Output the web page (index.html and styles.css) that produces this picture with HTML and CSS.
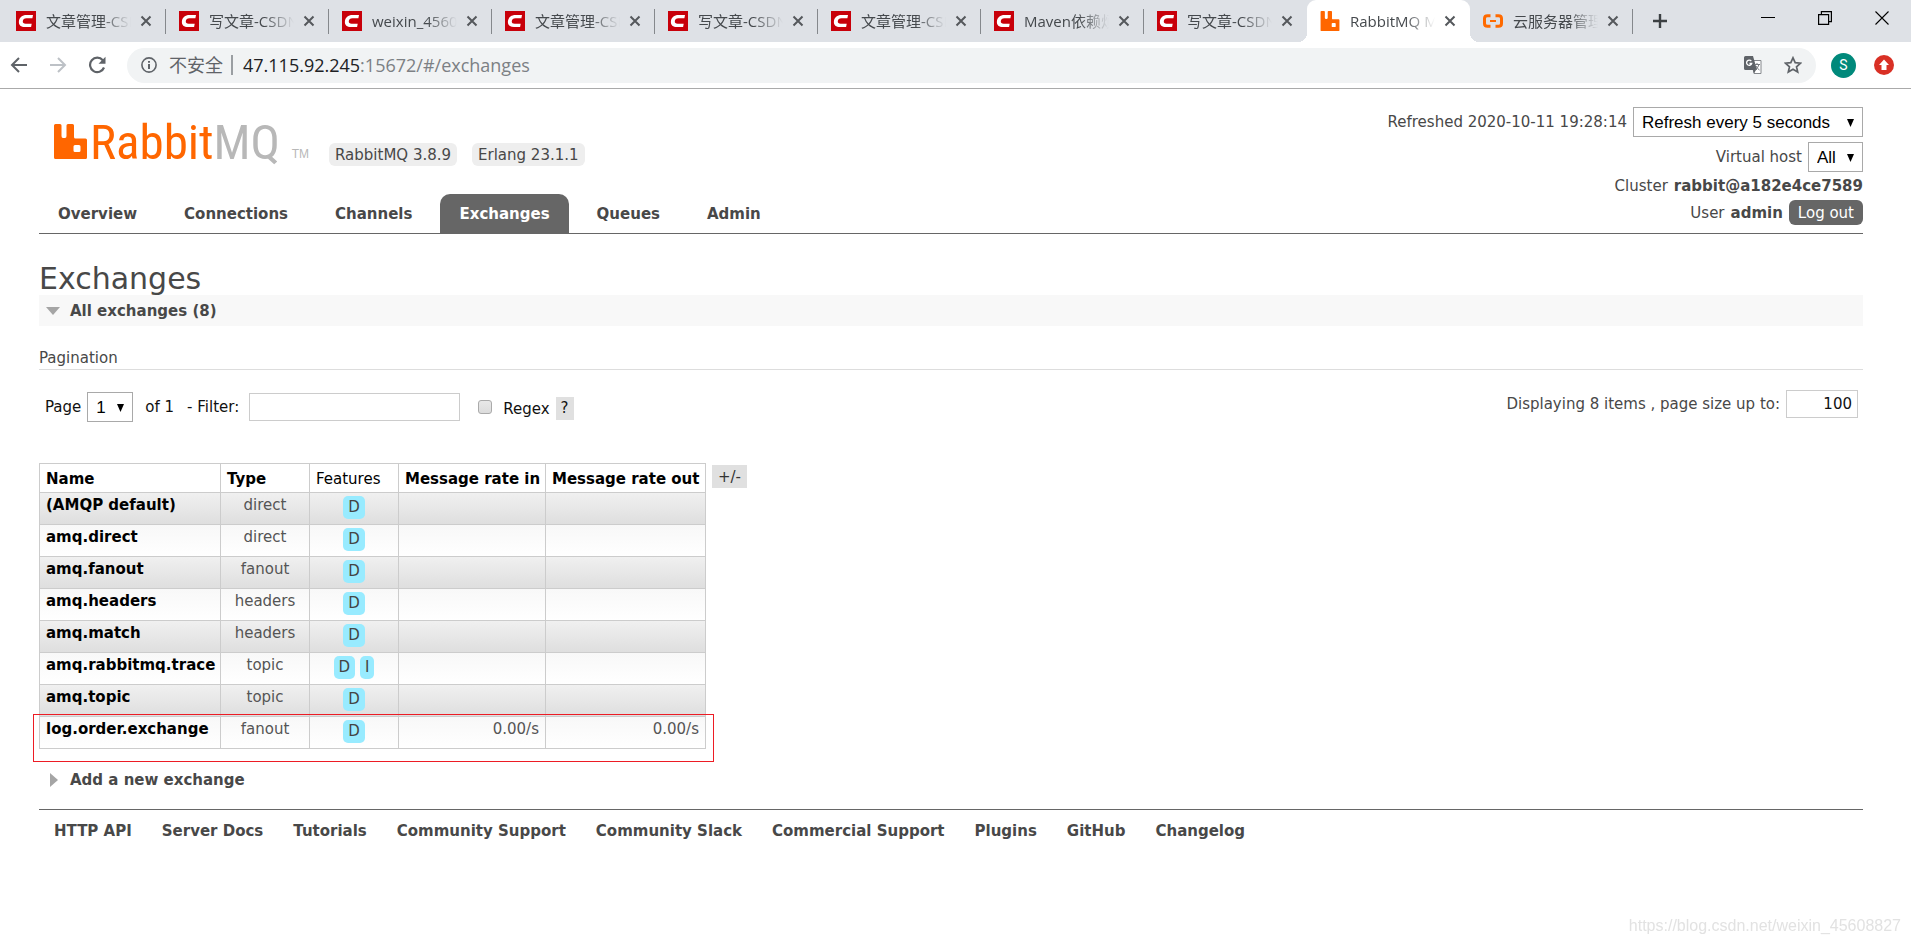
FILE: index.html
```html
<!DOCTYPE html>
<html lang="en">
<head>
<meta charset="utf-8">
<title>RabbitMQ Management</title>
<link rel="stylesheet" href="styles.css">
</head>
<body>
<svg class="sprite" aria-hidden="true">
  <symbol id="csdn" viewBox="0 0 20 20"><path fill="#c8000a" d="M0 0h20v20H0z"/><path fill="#fff" d="M17 4l-.6 3.200H10.500C8.200 7.200 7 8.300 6.800 10.100c-.2 1.800.8 2.700 2.900 2.700h6l-.6 3.200H9C5 16 2.600 14 2.900 10.400 3.200 6.500 6.200 4 10.500 4z"/></symbol>
  <symbol id="rabbit" viewBox="0 0 33 35"><path fill="#f60" fill-rule="evenodd" d="M1.500 0h4.500q1.500 0 1.500 1.500V12q0 2 1.500 2h2q1.500 0 1.500-2V1.500Q12.500 0 14 0h4.500Q20 0 20 1.500V13q0 1.500 1.500 1.500h10Q33 14.500 33 16v17.500q0 1.500-1.500 1.500h-30Q0 35 0 33.500v-32Q0 0 1.500 0zM21 21q-1.500 0-1.500 1.500v4Q19.500 28 21 28h4q1.500 0 1.500-1.500v-4Q26.500 21 25 21z"/></symbol>
  <symbol id="close" viewBox="0 0 12 12"><path stroke="#55585c" stroke-width="2" d="M1.500 1.500l9 9m0-9l-9 9"/></symbol>
</svg>

<header class="browser">
  <div class="tabstrip">
    <div class="tab"><svg class="fav"><use href="#csdn"/></svg><span class="tab-title">文章管理-CSDN</span><button class="tab-close" aria-label="Close"><svg><use href="#close"/></svg></button></div>
    <div class="tab"><svg class="fav"><use href="#csdn"/></svg><span class="tab-title">写文章-CSDN</span><button class="tab-close" aria-label="Close"><svg><use href="#close"/></svg></button></div>
    <div class="tab"><svg class="fav"><use href="#csdn"/></svg><span class="tab-title">weixin_45608827</span><button class="tab-close" aria-label="Close"><svg><use href="#close"/></svg></button></div>
    <div class="tab"><svg class="fav"><use href="#csdn"/></svg><span class="tab-title">文章管理-CSDN</span><button class="tab-close" aria-label="Close"><svg><use href="#close"/></svg></button></div>
    <div class="tab"><svg class="fav"><use href="#csdn"/></svg><span class="tab-title">写文章-CSDN</span><button class="tab-close" aria-label="Close"><svg><use href="#close"/></svg></button></div>
    <div class="tab"><svg class="fav"><use href="#csdn"/></svg><span class="tab-title">文章管理-CSDN</span><button class="tab-close" aria-label="Close"><svg><use href="#close"/></svg></button></div>
    <div class="tab"><svg class="fav"><use href="#csdn"/></svg><span class="tab-title">Maven依赖烦恼</span><button class="tab-close" aria-label="Close"><svg><use href="#close"/></svg></button></div>
    <div class="tab before-active"><svg class="fav"><use href="#csdn"/></svg><span class="tab-title">写文章-CSDN</span><button class="tab-close" aria-label="Close"><svg><use href="#close"/></svg></button></div>
    <div class="tab active"><svg class="fav"><use href="#rabbit"/></svg><span class="tab-title">RabbitMQ Management</span><button class="tab-close" aria-label="Close"><svg><use href="#close"/></svg></button></div>
    <div class="tab"><svg class="fav" viewBox="0 0 20 20"><g fill="none" stroke="#ff6a00" stroke-width="3"><path d="M7.500 4.700H4.500Q1.500 4.700 1.500 7.500v5q0 2.800 3 2.800h3M12.500 4.700h3q3 0 3 2.800v5q0 2.800-3 2.800h-3"/><path stroke-width="2" d="M7 10h6"/></g></svg><span class="tab-title">云服务器管理控制台</span><button class="tab-close" aria-label="Close"><svg><use href="#close"/></svg></button></div>
    <button class="new-tab" aria-label="New tab"><svg width="16" height="16" viewBox="0 0 16 16"><path stroke="#3c4043" stroke-width="2.400" d="M8 1v14M1 8h14"/></svg></button>
    <div class="window-buttons">
      <button aria-label="Minimize"><svg viewBox="0 0 14 14"><path stroke="#000" d="M0 6.500h14"/></svg></button>
      <button aria-label="Restore"><svg viewBox="0 0 14 14"><path fill="none" stroke="#000" stroke-width="1.200" d="M.6 3.600h10v9.800H.6zM3.400 3.400V.6h10v10h-2.800"/></svg></button>
      <button aria-label="Close window"><svg viewBox="0 0 14 14"><path stroke="#000" stroke-width="1.100" d="M.5 .5l13 13m0-13l-13 13"/></svg></button>
    </div>
  </div>
  <div class="toolbar">
    <button class="tool" aria-label="Back"><svg viewBox="0 0 18 18"><path fill="none" stroke="#5f6368" stroke-width="2" d="M17 9H2.500M9 2L2 9l7 7"/></svg></button>
    <button class="tool" aria-label="Forward"><svg viewBox="0 0 18 18"><path fill="none" stroke="#bdc1c6" stroke-width="2" d="M1 9h14.500M9 2l7 7-7 7"/></svg></button>
    <button class="tool" aria-label="Reload"><svg viewBox="0 0 18 18"><path fill="none" stroke="#5f6368" stroke-width="2.200" d="M14.800 4.300A7.200 7.200 0 1 0 16 11.500"/><path fill="#5f6368" d="M17.500 .8v7h-7z"/></svg></button>
    <div class="omnibox">
      <svg class="info" viewBox="0 0 16 16"><circle cx="8" cy="8" r="7.100" fill="none" stroke="#5f6368" stroke-width="1.600"/><path fill="#5f6368" d="M7 4h2v1.800H7zM7 7h2v5H7z"/></svg>
      <span class="insecure">不安全</span>
      <span class="omni-sep"></span>
      <span class="url"><b>47.115.92.245</b>:15672/#/exchanges</span>
      <button class="omni-btn" aria-label="Translate"><svg viewBox="0 0 18 18"><path fill="#fff" stroke="#85888c" d="M7.500 4.500h9.500v13H10z"/><path fill="#5f6368" d="M1.500 0h7.500l4 14H1.500Q0 14 0 12.500v-11Q0 0 1.500 0zM9 14h3l-2 3.500z"/><path fill="none" stroke="#fff" stroke-width="1.300" d="M7.300 5.200A2.600 2.600 0 1 0 7.700 7.500H5.500"/><path fill="none" stroke="#777a7e" d="M10.500 8.500H16M13 7v1.500M15 8.500q-1 3.500-3.500 5M12 10q1 2.500 3.500 4"/></svg></button>
      <button class="omni-btn" aria-label="Bookmark"><svg viewBox="0 0 18 18"><path fill="none" stroke="#5f6368" stroke-width="1.700" d="M9 1.800l2.200 4.900 5.300.5-4 3.600 1.200 5.300L9 13.300l-4.700 2.800 1.200-5.300-4-3.600 5.300-.5z"/></svg></button>
    </div>
    <button class="avatar" aria-label="Profile">S</button>
    <button class="update" aria-label="Update"><svg viewBox="0 0 20 20"><circle cx="10" cy="10" r="10" fill="#d93025"/><path fill="#fff" d="M10 4.500l5 5.500h-2.500v5h-5v-5H5z"/></svg></button>
  </div>
</header>

<div class="page">
  <header class="masthead">
    <div class="brand">
      <div class="logo-row">
        <div class="logo"><svg class="mark"><use href="#rabbit"/></svg><span class="word">Rabbit<i>MQ</i></span><span class="tm">TM</span></div>
        <ul class="versions"><li>RabbitMQ 3.8.9</li><li>Erlang 23.1.1</li></ul>
      </div>
      <nav class="menu">
        <a href="#">Overview</a><a href="#">Connections</a><a href="#">Channels</a><a href="#" class="selected">Exchanges</a><a href="#">Queues</a><a href="#">Admin</a>
      </nav>
    </div>
    <div class="login">
      <div class="login-row"><label for="refresh">Refreshed 2020-10-11 19:28:14</label><select id="refresh" class="pick refresh"><option>Refresh every 5 seconds</option></select></div>
      <div class="login-row"><label for="vhost">Virtual host</label><select id="vhost" class="pick vhost"><option>All</option></select></div>
      <div class="login-row">Cluster <strong>rabbit@a182e4ce7589</strong></div>
      <div class="login-row">User <strong>admin</strong><button class="logout">Log out</button></div>
    </div>
  </header>

  <main>
    <h1>Exchanges</h1>
    <h2 class="section open"><svg class="arrow" viewBox="0 0 14 14"><path fill="#a5a5a5" d="M0 3h14L7 11z"/></svg>All exchanges (8)</h2>
    <h3>Pagination</h3>
    <div class="paging">
      <div class="filter">
        <label for="page">Page</label>
        <select id="page" class="pick page-no"><option>1</option></select>
        <span class="of">of 1</span>
        <label for="filter">- Filter:</label>
        <input id="filter" class="filter-box" type="text">
        <input id="regex" class="check" type="checkbox">
        <label for="regex" class="regex-label">Regex</label>
        <button class="help">?</button>
      </div>
      <div class="size"><label for="size">Displaying 8 items , page size up to:</label><input id="size" type="text" value="100"></div>
    </div>

    <div class="listing">
      <table>
        <colgroup><col class="c-name"><col class="c-type"><col class="c-type"><col class="c-in"><col class="c-out"></colgroup>
        <thead><tr><th>Name</th><th>Type</th><th class="plain">Features</th><th>Message rate in</th><th>Message rate out</th></tr></thead>
        <tbody>
          <tr><td><a href="#">(AMQP default)</a></td><td class="c">direct</td><td class="c"><span class="tag">D</span></td><td></td><td></td></tr>
          <tr><td><a href="#">amq.direct</a></td><td class="c">direct</td><td class="c"><span class="tag">D</span></td><td></td><td></td></tr>
          <tr><td><a href="#">amq.fanout</a></td><td class="c">fanout</td><td class="c"><span class="tag">D</span></td><td></td><td></td></tr>
          <tr><td><a href="#">amq.headers</a></td><td class="c">headers</td><td class="c"><span class="tag">D</span></td><td></td><td></td></tr>
          <tr><td><a href="#">amq.match</a></td><td class="c">headers</td><td class="c"><span class="tag">D</span></td><td></td><td></td></tr>
          <tr><td><a href="#">amq.rabbitmq.trace</a></td><td class="c">topic</td><td class="c"><span class="tag">D</span> <span class="tag">I</span></td><td></td><td></td></tr>
          <tr><td><a href="#">amq.topic</a></td><td class="c">topic</td><td class="c"><span class="tag">D</span></td><td></td><td></td></tr>
          <tr><td><a href="#">log.order.exchange</a></td><td class="c">fanout</td><td class="c"><span class="tag">D</span></td><td class="r">0.00/s</td><td class="r">0.00/s</td></tr>
        </tbody>
      </table>
      <button class="columns">+/-</button>
      <div class="highlight"></div>
    </div>

    <h2 class="section closed"><svg class="arrow" viewBox="0 0 14 14"><path fill="#a5a5a5" d="M4 0v14l8-7z"/></svg>Add a new exchange</h2>
  </main>

  <footer>
    <a href="#">HTTP API</a><a href="#">Server Docs</a><a href="#">Tutorials</a><a href="#">Community Support</a><a href="#">Community Slack</a><a href="#">Commercial Support</a><a href="#">Plugins</a><a href="#">GitHub</a><a href="#">Changelog</a>
  </footer>
</div>
<div class="watermark">https://blog.csdn.net/weixin_45608827</div>
</body>
</html>
```

FILE: styles.css
```css
* { box-sizing: border-box; }
body {
  margin: 0;
  background: #fff;
  color: #484848;
  font: 15px/18px Verdana, "DejaVu Sans", sans-serif;
}
a { color: inherit; text-decoration: none; }
button { padding: 0; border: 0; background: none; font: inherit; color: inherit; }
svg { display: block; }
.sprite { display: none; }

/* Browser frame */
.browser { font-family: "Open Sans", "Noto Sans CJK SC", sans-serif; border-bottom: 1px solid #aaa; }
.tabstrip { display: flex; height: 42px; padding-left: 3px; background: #dee1e6; }
.tab {
  display: flex;
  flex: 0 1 163px;
  min-width: 0;
  align-items: center;
  padding: 0 14px 0 13px;
  position: relative;
  color: #45494d;
}
.tab::after {
  content: "";
  position: absolute;
  right: 0;
  top: 9px;
  width: 1px;
  height: 25px;
  background: #85888c;
}
.tab.before-active::after, .tab.active::after { display: none; }
.tab.active { background: #fff; border-radius: 9px 9px 0 0; }
.tab.active::before {
  content: "";
  position: absolute;
  left: -9px;
  right: -9px;
  bottom: 0;
  height: 9px;
  background:
    radial-gradient(circle at 0 0, transparent 9px, #fff 9px) left / 9px 9px no-repeat,
    radial-gradient(circle at 100% 0, transparent 9px, #fff 9px) right / 9px 9px no-repeat;
}
.fav { flex: none; width: 20px; height: 20px; }
.tab-title {
  flex: 1;
  min-width: 0;
  margin: 0 9px 0 10px;
  overflow: hidden;
  white-space: nowrap;
  line-height: 24px;
  -webkit-mask-image: linear-gradient(to right, #000 65%, transparent);
  mask-image: linear-gradient(to right, #000 65%, transparent);
}
.tab-close svg { width: 12px; height: 12px; }
.new-tab { margin-left: 19px; }
.window-buttons { display: flex; align-items: center; gap: 43px; margin-left: auto; padding: 0 22px 6px 0; }
.window-buttons svg { width: 14px; height: 14px; }
.toolbar { display: flex; align-items: center; height: 46px; padding: 0 17px 0 10px; }
.tool { margin-right: 21px; }
.tool svg { width: 18px; height: 18px; }
.omnibox {
  display: flex;
  flex: 1;
  align-items: center;
  height: 35px;
  margin-right: 15px;
  padding: 0 14px;
  border-radius: 18px;
  background: #f1f3f4;
  color: #7c8084;
  font-size: 18px;
}
.info { width: 16px; height: 16px; margin-right: 12px; }
.insecure { color: #5f6368; }
.omni-sep { width: 2px; height: 20px; margin: 0 10px 0 8px; background: #9a9ea2; }
.url { flex: 1; }
.url b { color: #202124; font-weight: 400; }
.omni-btn { margin-left: 22px; }
.omni-btn svg { width: 18px; height: 18px; }
.avatar {
  width: 25px;
  height: 25px;
  margin-right: 18px;
  border-radius: 50%;
  background: #00897b;
  color: #fff;
  font: 14px/25px Roboto, sans-serif;
}
.update svg { width: 20px; height: 20px; }

/* Masthead */
.page { padding: 0 48px 0 39px; }
.masthead { display: flex; justify-content: space-between; border-bottom: 1px solid #666; }
.brand { display: flex; flex-direction: column; justify-content: space-between; padding-top: 35px; }
.logo-row { display: flex; align-items: flex-start; padding-left: 15px; }
.logo { display: flex; align-items: flex-end; height: 35px; width: 255px; color: #f60; }
.mark { width: 33px; height: 35px; margin-right: 3px; }
.word { font: 400 49px/32px "Roboto Condensed", "Liberation Sans Narrow", "Open Sans Condensed", Roboto, sans-serif; }
.word i { color: #b8b8b8; font-style: normal; }
.tm { margin-left: auto; color: #b8b8b8; font: 12px/10px "Liberation Sans", sans-serif; }
.versions { display: flex; gap: 15px; margin: 19px 0 0 20px; padding: 0; list-style: none; }
.versions li { padding: 1px 6px 0; border-radius: 6px; background: #eee; line-height: 22px; }
.menu { display: flex; gap: 9px; font-weight: 700; }
.menu a { padding: 2px 19px 0; border-radius: 10px 10px 0 0; line-height: 37px; }
.menu .selected { background: #666; color: #fff; }
.login { display: flex; flex-direction: column; align-items: flex-end; gap: 5px; padding: 18px 0 8px; }
.login-row { display: flex; align-items: center; gap: 6px; }
.pick {
  appearance: none;
  height: 30px;
  padding: 0 8px;
  border: 1px solid #a9a9a9;
  border-radius: 0;
  background: #fff url("data:image/svg+xml,%3Csvg xmlns='http://www.w3.org/2000/svg' width='7' height='8'%3E%3Cpath d='M0 0h7L3.500 8z'/%3E%3C/svg%3E") right 8px top 11px no-repeat;
  color: #000;
  font: 17px "Liberation Sans", Arial, sans-serif;
}
.refresh { width: 230px; }
.vhost { width: 55px; }
.logout { padding: 1px 9px 0; border-radius: 6px; background: #666; color: #fff; line-height: 24px; }

/* Content */
h1 { margin: 26px 0 0; padding-top: 2px; font-size: 30px; font-weight: 400; line-height: 33px; }
.section { display: flex; align-items: center; gap: 10px; margin: 0; padding: 1px 0 0 7px; font-size: 15px; line-height: 30px; }
.section.open { background: #f8f8f8; }
.section.closed { margin-top: 15px; }
.arrow { width: 14px; height: 14px; }
h3 { margin: 23px 0 20px; padding-bottom: 1px; border-bottom: 1px solid #ddd; font-size: 15px; font-weight: 400; line-height: 19px; }
.paging { display: flex; justify-content: space-between; align-items: flex-start; padding: 0 5px 0 6px; }
.filter { display: flex; align-items: center; padding-top: 2px; color: #111; }
.page-no { width: 46px; margin: 0 12px 0 6px; }
.of { margin-right: 13px; }
.filter-box, .size input {
  height: 28px;
  padding: 0 5px;
  border: 1px solid #ccc;
  background: #fff;
  color: #111;
  font: inherit;
}
.filter-box { width: 211px; margin: 0 18px 0 10px; }
.check {
  appearance: none;
  width: 14px;
  height: 14px;
  margin: 0 11px 0 0;
  border: 1px solid #aaa;
  border-radius: 3px;
  background: linear-gradient(#e8e8e8, #dcdcdc);
}
.regex-label { padding-top: 4px; }
.help { width: 18px; margin: 3px 0 0 6px; background: #e0e0e0; line-height: 23px; }
.size { display: flex; align-items: center; gap: 6px; }
.size input { width: 72px; text-align: right; }
.listing { display: flex; align-items: flex-start; gap: 6px; position: relative; margin-top: 41px; }
table { width: 666px; table-layout: fixed; border-collapse: collapse; }
.c-name { width: 181px; }
.c-type { width: 89px; }
.c-in { width: 147px; }
.c-out { width: 160px; }
th, td { padding: 3px 6px; border: 1px solid #ccc; text-align: left; white-space: nowrap; }
th { height: 29px; padding-top: 5px; color: #000; }
th.plain { font-weight: 400; }
td { height: 32px; vertical-align: top; color: #555; }
td a { color: #000; font-weight: 700; }
td.c { text-align: center; }
td.r { text-align: right; }
tbody tr { background: linear-gradient(#f8f8f8, #fff); }
tbody tr:nth-child(odd) { background: linear-gradient(#f0f0f0, #dedede); }
.tag { display: inline-block; padding: 0 5px; border-radius: 5px; background: #98ebff; color: #444; line-height: 23px; vertical-align: top; }
.columns { margin-top: 2px; padding: 1px 6px 0; background: #e0e0e0; color: #333; line-height: 22px; }
.highlight {
  position: absolute;
  left: -6px;
  bottom: -13px;
  width: 681px;
  height: 48px;
  border: 1px solid #ed1c24;
}
footer { display: flex; flex-wrap: wrap; gap: 30px; margin-top: 14px; padding: 12px 15px; border-top: 1px solid #666; font-weight: 700; }
.watermark {
  position: fixed;
  right: 10px;
  bottom: 9px;
  color: #e2e2e2;
  font: 16px/20px "Liberation Sans", Arial, sans-serif;
}
```
